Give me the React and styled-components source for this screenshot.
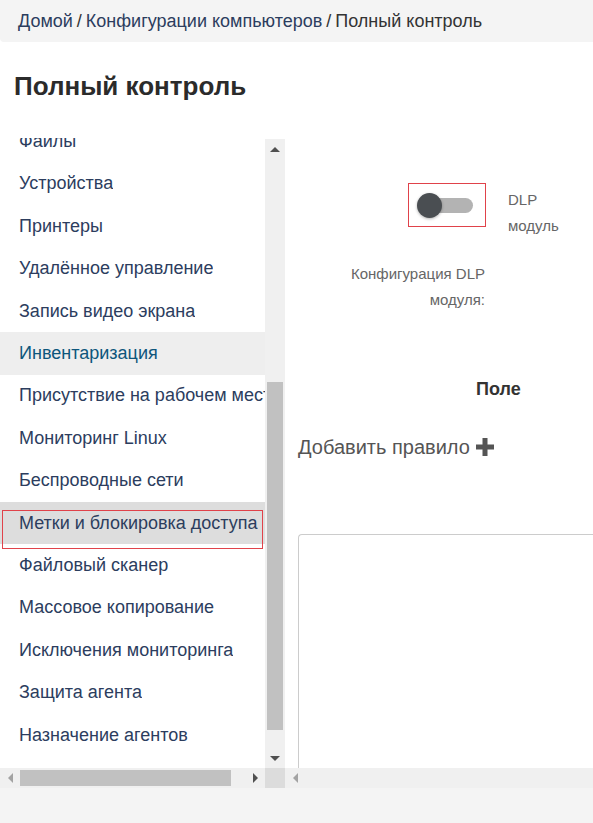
import React from 'react';
import styled, {createGlobalStyle} from "styled-components";

const GlobalStyle = createGlobalStyle`
    html, body {
        margin: 0;
        padding: 0;
        background: #fff;
        font-family: "Liberation Sans", Arial, sans-serif;
    }
`;

const Page = styled.div`
    width: 593px;
    height: 823px;
    overflow: hidden;
    display: flex;
    flex-direction: column;
`;

const Breadcrumbs = styled.nav`
    height: 42px;
    flex: none;
    display: flex;
    align-items: center;
    padding-left: 18px;
    background: #f4f4f4;
    border-radius: 0 0 0 4px;
    font-size: 18px;
    color: #333;
    white-space: nowrap;
`;

const Crumb = styled.a`
    color: #2c3d5e;
    text-decoration: none;
`;

const Sep = styled.span`
    color: #333;
    margin: 0 4px;
`;

const Title = styled.h1`
    height: 96px;
    flex: none;
    margin: 0;
    padding-left: 14px;
    display: flex;
    align-items: center;
    box-sizing: border-box;
    padding-bottom: 8px;
    font-size: 26px;
    font-weight: bold;
    color: #2b2b2b;
`;

const Panels = styled.div`
    height: 650px;
    flex: none;
    display: flex;
`;

const SidePane = styled.div`
    width: 285px;
    flex: none;
    display: grid;
    grid-template-columns: 265px 20px;
    grid-template-rows: 630px 20px;
`;

const MenuList = styled.ul`
    list-style: none;
    margin: 0;
    padding: 0;
    overflow: hidden;
`;

const MenuInner = styled.div`
    margin-top: -17.6px;
`;

const MenuItem = styled.li`
    position: relative;
    height: 42.4px;
    display: flex;
    align-items: center;
    padding-left: 19px;
    font-size: 18px;
    color: ${p => p.active ? '#0d567c' : '#2c3d5e'};
    background: ${p => p.active ? '#eeeeee' : p.selected ? '#dddddd' : 'transparent'};
`;

const ItemText = styled.span`
    white-space: nowrap;
    overflow: hidden;
`;

const Marker = styled.span`
    position: absolute;
    z-index: 1;
    left: 2px;
    right: 2px;
    top: 8px;
    height: 39px;
    border: 1px solid #e0424a;
    box-sizing: border-box;
    pointer-events: none;
`;

const VScroll = styled.div`
    background: #f0f0f0;
    display: flex;
    flex-direction: column;
    align-items: center;
    margin-top: 1px;
`;

const ScrollButton = styled.div`
    flex: none;
    width: 20px;
    height: 20px;
    display: flex;
    align-items: center;
    justify-content: center;
`;

const VTrack = styled.div`
    flex: 1;
    width: 100%;
    display: flex;
    justify-content: center;
    padding-top: ${p => p.offset}px;
    box-sizing: border-box;
`;

const VThumb = styled.div`
    width: 16px;
    height: ${p => p.size}px;
    background: #c1c1c1;
`;

const HScroll = styled.div`
    background: #f0f0f0;
    display: flex;
    align-items: center;
`;

const HThumb = styled.div`
    width: ${p => p.size}px;
    height: 16px;
    margin-right: auto;
    background: #c1c1c1;
`;

const Corner = styled.div`
    background: #dcdcdc;
`;

const MainPane = styled.div`
    flex: 1;
    display: flex;
    flex-direction: column;
    min-width: 0;
`;

const MainBody = styled.div`
    flex: 1;
    overflow: hidden;
    padding-left: 13px;
`;

const Form = styled.div`
    display: grid;
    grid-template-columns: 200px 1fr;
    column-gap: 23px;
    row-gap: 22px;
    padding-top: 45px;
    margin-left: -13px;
`;

const Label = styled.div`
    justify-self: end;
    text-align: right;
    font-size: 15px;
    line-height: 26px;
    color: #666;
`;

const Hint = styled.div`
    font-size: 15px;
    line-height: 26px;
    color: #666;
    padding-top: 4px;
`;

const ToggleBox = styled.div`
    justify-self: end;
    width: 78px;
    height: 44px;
    border: 1px solid #e0424a;
    box-sizing: border-box;
    margin-right: -1px;
    display: flex;
    align-items: center;
    padding-left: 8px;
`;

const Switch = styled.div`
    position: relative;
    width: 55px;
    height: 15px;
    border-radius: 8px;
    background: #b3b3b3;
    margin-left: 1px;
`;

const Knob = styled.div`
    position: absolute;
    left: -1px;
    top: -5px;
    width: 25px;
    height: 25px;
    border-radius: 50%;
    background: #4a4e52;
    box-shadow: 0 1px 3px rgba(0, 0, 0, .3);
`;

const ColumnHead = styled.div`
    padding-left: 178px;
    margin-top: 66px;
    font-size: 18px;
    font-weight: bold;
    color: #333;
    line-height: 20px;
`;

const AddRule = styled.div`
    margin-top: 38px;
    display: flex;
    align-items: center;
    gap: 6px;
    font-size: 20px;
    color: #555;
    line-height: 20px;
`;

const RuleBox = styled.div`
    margin-top: 77px;
    height: 300px;
    border: 1px solid #cccccc;
    border-right: none;
    border-radius: 4px 0 0 0;
`;

const MainHScroll = styled.div`
    height: 20px;
    flex: none;
    background: #f0f0f0;
    display: flex;
    align-items: center;
`;

const Footer = styled.div`
    flex: 1;
    background: #f4f4f4;
`;

const Arrow = ({dir, color = '#505050'}) => {
    const points = {
        up: '0,5 5,0 10,5',
        down: '0,0 10,0 5,5',
        left: '5,0 5,10 0,5',
        right: '0,0 5,5 0,10',
    }[dir];
    const vertical = dir === 'up' || dir === 'down';
    return (
        <svg width={vertical ? 10 : 5} height={vertical ? 5 : 10} viewBox={vertical ? '0 0 10 5' : '0 0 5 10'}>
            <polygon points={points} fill={color}/>
        </svg>
    );
};

const Plus = () => (
    <svg width="18" height="18" viewBox="0 0 18 18">
        <path d="M6.5 0h5v6.5H18v5h-6.5V18h-5v-6.5H0v-5h6.5z" fill="#555"/>
    </svg>
);

const menu = [
    'Файлы',
    'Устройства',
    'Принтеры',
    'Удалённое управление',
    'Запись видео экрана',
    'Инвентаризация',
    'Присутствие на рабочем месте',
    'Мониторинг Linux',
    'Беспроводные сети',
    'Метки и блокировка доступа',
    'Файловый сканер',
    'Массовое копирование',
    'Исключения мониторинга',
    'Защита агента',
    'Назначение агентов',
];

const App = () => {
    return (
        <Page>
            <GlobalStyle/>
            <Breadcrumbs>
                <Crumb href="#">Домой</Crumb><Sep>/</Sep>
                <Crumb href="#">Конфигурации компьютеров</Crumb><Sep>/</Sep>
                <span>Полный контроль</span>
            </Breadcrumbs>
            <Title>Полный контроль</Title>
            <Panels>
                <SidePane>
                    <MenuList>
                        <MenuInner>
                            {menu.map(item => (
                                <MenuItem key={item}
                                          active={item === 'Инвентаризация'}
                                          selected={item === 'Метки и блокировка доступа'}>
                                    <ItemText>{item}</ItemText>
                                    {item === 'Метки и блокировка доступа' && <Marker/>}
                                </MenuItem>
                            ))}
                        </MenuInner>
                    </MenuList>
                    <VScroll>
                        <ScrollButton><Arrow dir="up"/></ScrollButton>
                        <VTrack offset={223}>
                            <VThumb size={348}/>
                        </VTrack>
                        <ScrollButton><Arrow dir="down"/></ScrollButton>
                    </VScroll>
                    <HScroll>
                        <ScrollButton><Arrow dir="left" color="#a3a3a3"/></ScrollButton>
                        <HThumb size={211}/>
                        <ScrollButton><Arrow dir="right"/></ScrollButton>
                    </HScroll>
                    <Corner/>
                </SidePane>
                <MainPane>
                    <MainBody>
                        <Form>
                            <ToggleBox>
                                <Switch><Knob/></Switch>
                            </ToggleBox>
                            <Hint>DLP<br/>модуль</Hint>
                            <Label>Конфигурация DLP<br/>модуля:</Label>
                            <div/>
                        </Form>
                        <ColumnHead>Поле</ColumnHead>
                        <AddRule>Добавить правило <Plus/></AddRule>
                        <RuleBox/>
                    </MainBody>
                    <MainHScroll>
                        <ScrollButton><Arrow dir="left" color="#a3a3a3"/></ScrollButton>
                    </MainHScroll>
                </MainPane>
            </Panels>
            <Footer/>
        </Page>
    );
};

export default App;
